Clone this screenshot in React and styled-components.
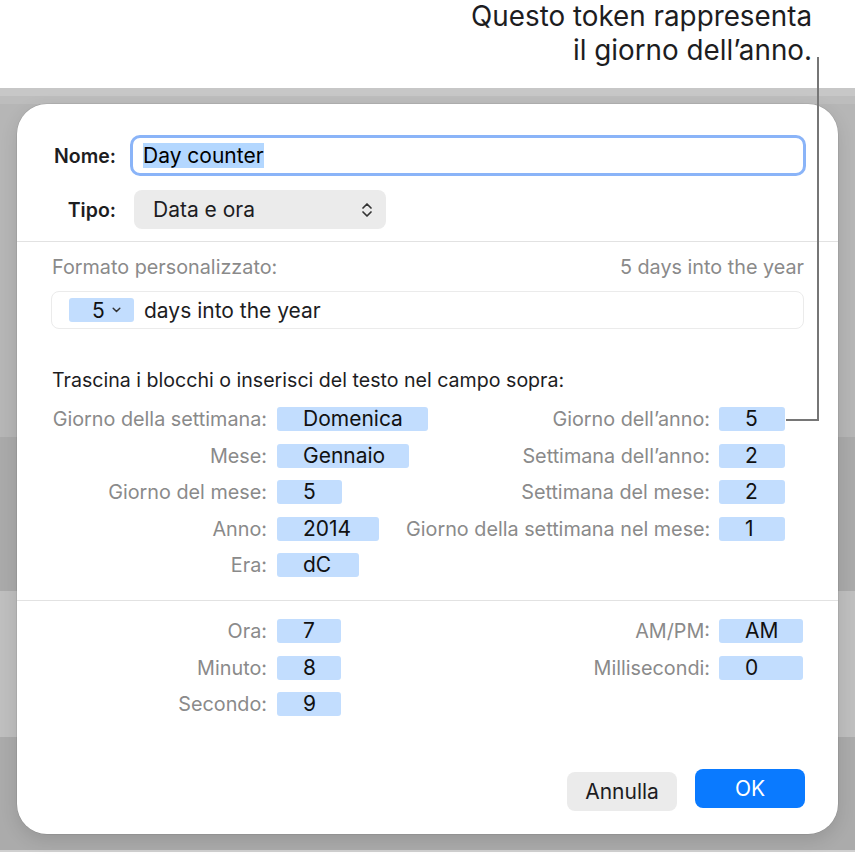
import React from 'react';
import styled, { createGlobalStyle } from 'styled-components';

const Global = createGlobalStyle`
  html, body { margin: 0; padding: 0; background: #fff; }
  body { font-family: Inter, "Noto Sans", sans-serif; -webkit-font-smoothing: antialiased; }
`;

const Page = styled.div`
  position: relative;
  width: 857px;
  height: 854px;
  overflow: hidden;
  background: #fff;
`;

const Caption = styled.div`
  display: flow-root;
  height: 88px;
  box-sizing: border-box;
  padding-right: 45px;
  text-align: right;
  font-size: 27.8px;
  line-height: 34px;
  color: #1d1d1f;
`;

const CaptionText = styled.div`
  margin-top: -1px;
`;

const Backdrop = styled.div`
  width: 855px;
  height: 764px;
  box-sizing: border-box;
  padding: 16px 0 0 17px;
  background: linear-gradient(
    to bottom,
    #c7c7c7 0 8px,
    #bdbdbd 8px 16px,
    #b6b6b6 16px 349px,
    #aaaaaa 349px 503px,
    #bfbfbf 503px 649px,
    #ababab 649px 762px,
    #d0d0d0 762px
  );
`;

const Dialog = styled.div`
  width: 821px;
  height: 730px;
  box-sizing: border-box;
  background: #fff;
  border-radius: 30px;
  box-shadow: 0 0 0 0.5px rgba(0, 0, 0, 0.12), 0 6px 18px rgba(0, 0, 0, 0.12);
  display: flex;
  flex-direction: column;
  > * { flex-shrink: 0; }
`;

const Header = styled.div`
  display: grid;
  grid-template-columns: 99px 1fr;
  column-gap: 14px;
  row-gap: 14px;
  align-items: center;
  padding: 31px 32px 12px 0;
`;

const BoldLabel = styled.div`
  text-align: right;
  font-size: 19.5px;
  font-weight: 600;
  color: #1d1d1f;
`;

const NameInput = styled.div`
  height: 41px;
  box-sizing: border-box;
  border: 3px solid #8ab4f8;
  border-radius: 10px;
  display: flex;
  align-items: center;
  padding: 0 10px;
  font-size: 21px;
  color: #000;
`;

const Selected = styled.span`
  background: #b3d7ff;
  line-height: 25px;
`;

const Select = styled.div`
  width: 252px;
  height: 39px;
  margin-left: 4px;
  box-sizing: border-box;
  background: #ebebeb;
  border-radius: 8px;
  display: flex;
  align-items: center;
  justify-content: space-between;
  padding: 0 13px 0 19px;
  font-size: 21px;
  color: #1d1d1f;
`;

const Divider = styled.div`
  height: 1px;
  background: #e2e2e2;
`;

const FormatSection = styled.div`
  padding: 15px 34px 23px 34px;
`;

const FormatHead = styled.div`
  display: flex;
  justify-content: space-between;
  font-size: 19.8px;
  line-height: 20px;
  color: #8a8a8a;
  padding-left: 1px;
`;

const FieldBox = styled.div`
  margin-top: 14px;
  height: 38px;
  box-sizing: border-box;
  border: 1px solid #ebebeb;
  border-radius: 8px;
  display: flex;
  align-items: center;
  gap: 10px;
  padding-left: 17px;
  font-size: 21px;
  color: #1d1d1f;
`;

const MenuToken = styled.div`
  width: 65px;
  height: 24px;
  box-sizing: border-box;
  background: #c2ddfe;
  border-radius: 3px;
  display: flex;
  align-items: center;
  padding-left: 23px;
  gap: 7px;
  color: #111;
`;

const Instruction = styled.div`
  margin-top: 41px;
  padding-left: 1px;
  font-size: 19.6px;
  line-height: 20px;
  color: #1d1d1f;
`;

const TokenGrid = styled.div`
  margin-top: ${(p) => p.$top}px;
  display: grid;
  grid-template-columns: 226px 129px 313px 84px;
  grid-auto-rows: 24px;
  row-gap: 12.5px;
  align-items: center;
`;

const FieldLabel = styled.div`
  text-align: right;
  padding-right: ${(p) => p.$pr}px;
  font-size: 19.8px;
  line-height: 24px;
  color: #8a8a8a;
  white-space: nowrap;
`;

const Token = styled.div`
  width: ${(p) => p.$w}px;
  height: 24px;
  box-sizing: border-box;
  background: #c2ddfe;
  border-radius: 3px;
  padding-left: 26px;
  font-size: 21px;
  line-height: 24px;
  color: #111;
`;

const TimeSection = styled.div`
  padding: 18px 34px 0 34px;
`;

const Footer = styled.div`
  margin-top: auto;
  display: flex;
  justify-content: flex-end;
  align-items: flex-start;
  gap: 18px;
  padding: 0 33px 23px 0;
`;

const Button = styled.div`
  width: 110px;
  height: 39px;
  margin-top: ${(p) => (p.$primary ? 0 : 3)}px;
  border-radius: 8px;
  display: flex;
  align-items: center;
  justify-content: center;
  font-size: 21px;
  background: ${(p) => (p.$primary ? '#0a7aff' : '#ebebeb')};
  color: ${(p) => (p.$primary ? '#fff' : '#1d1d1f')};
`;

const Leader = styled.svg`
  position: absolute;
  left: 0;
  top: 0;
  pointer-events: none;
`;

const dateRows = [
  ['Giorno della settimana:', 'Domenica', 151, 'Giorno dell’anno:', '5', 66],
  ['Mese:', 'Gennaio', 132, 'Settimana dell’anno:', '2', 66],
  ['Giorno del mese:', '5', 65, 'Settimana del mese:', '2', 66],
  ['Anno:', '2014', 102, 'Giorno della settimana nel mese:', '1', 66],
  ['Era:', 'dC', 82, null, null, null],
];

const timeRows = [
  ['Ora:', '7', 64, 'AM/PM:', 'AM', 84],
  ['Minuto:', '8', 64, 'Millisecondi:', '0', 84],
  ['Secondo:', '9', 64, null, null, null],
];

function Rows({ rows, top }) {
  return (
    <TokenGrid $top={top}>
      {rows.map(([l1, t1, w1, l2, t2, w2], i) => (
        <React.Fragment key={i}>
          <FieldLabel $pr={10}>{l1}</FieldLabel>
          <div><Token $w={w1}>{t1}</Token></div>
          <FieldLabel $pr={9}>{l2 || ''}</FieldLabel>
          <div>{t2 && <Token $w={w2}>{t2}</Token>}</div>
        </React.Fragment>
      ))}
    </TokenGrid>
  );
}

export default function App() {
  return (
    <Page>
      <Global />
      <Caption>
        <CaptionText>
          <div>Questo token rappresenta</div>
          <div>il giorno dell’anno.</div>
        </CaptionText>
      </Caption>
      <Backdrop>
        <Dialog>
          <Header>
            <BoldLabel>Nome:</BoldLabel>
            <NameInput><Selected>Day counter</Selected></NameInput>
            <BoldLabel>Tipo:</BoldLabel>
            <Select>
              <span>Data e ora</span>
              <svg width="12" height="16" viewBox="0 0 12 16">
                <path d="M2 6 L6 2 L10 6 M2 10 L6 14 L10 10" fill="none" stroke="#333" strokeWidth="1.7" strokeLinecap="round" strokeLinejoin="round" />
              </svg>
            </Select>
          </Header>
          <Divider />
          <FormatSection>
            <FormatHead>
              <span>Formato personalizzato:</span>
              <span>5 days into the year</span>
            </FormatHead>
            <FieldBox>
              <MenuToken>
                <span>5</span>
                <svg width="9" height="6" viewBox="0 0 9 6">
                  <path d="M1.2 1.2 L4.5 4.5 L7.8 1.2" fill="none" stroke="#333" strokeWidth="1.5" strokeLinecap="round" strokeLinejoin="round" />
                </svg>
              </MenuToken>
              <span>days into the year</span>
            </FieldBox>
            <Instruction>Trascina i blocchi o inserisci del testo nel campo sopra:</Instruction>
            <Rows rows={dateRows} top={17} />
          </FormatSection>
          <Divider />
          <TimeSection>
            <Rows rows={timeRows} top={0} />
          </TimeSection>
          <Footer>
            <Button>Annulla</Button>
            <Button $primary>OK</Button>
          </Footer>
        </Dialog>
      </Backdrop>
      <Leader width="857" height="854">
        <path d="M818 57 V420 H786" fill="none" stroke="#767676" strokeWidth="2" />
      </Leader>
    </Page>
  );
}
